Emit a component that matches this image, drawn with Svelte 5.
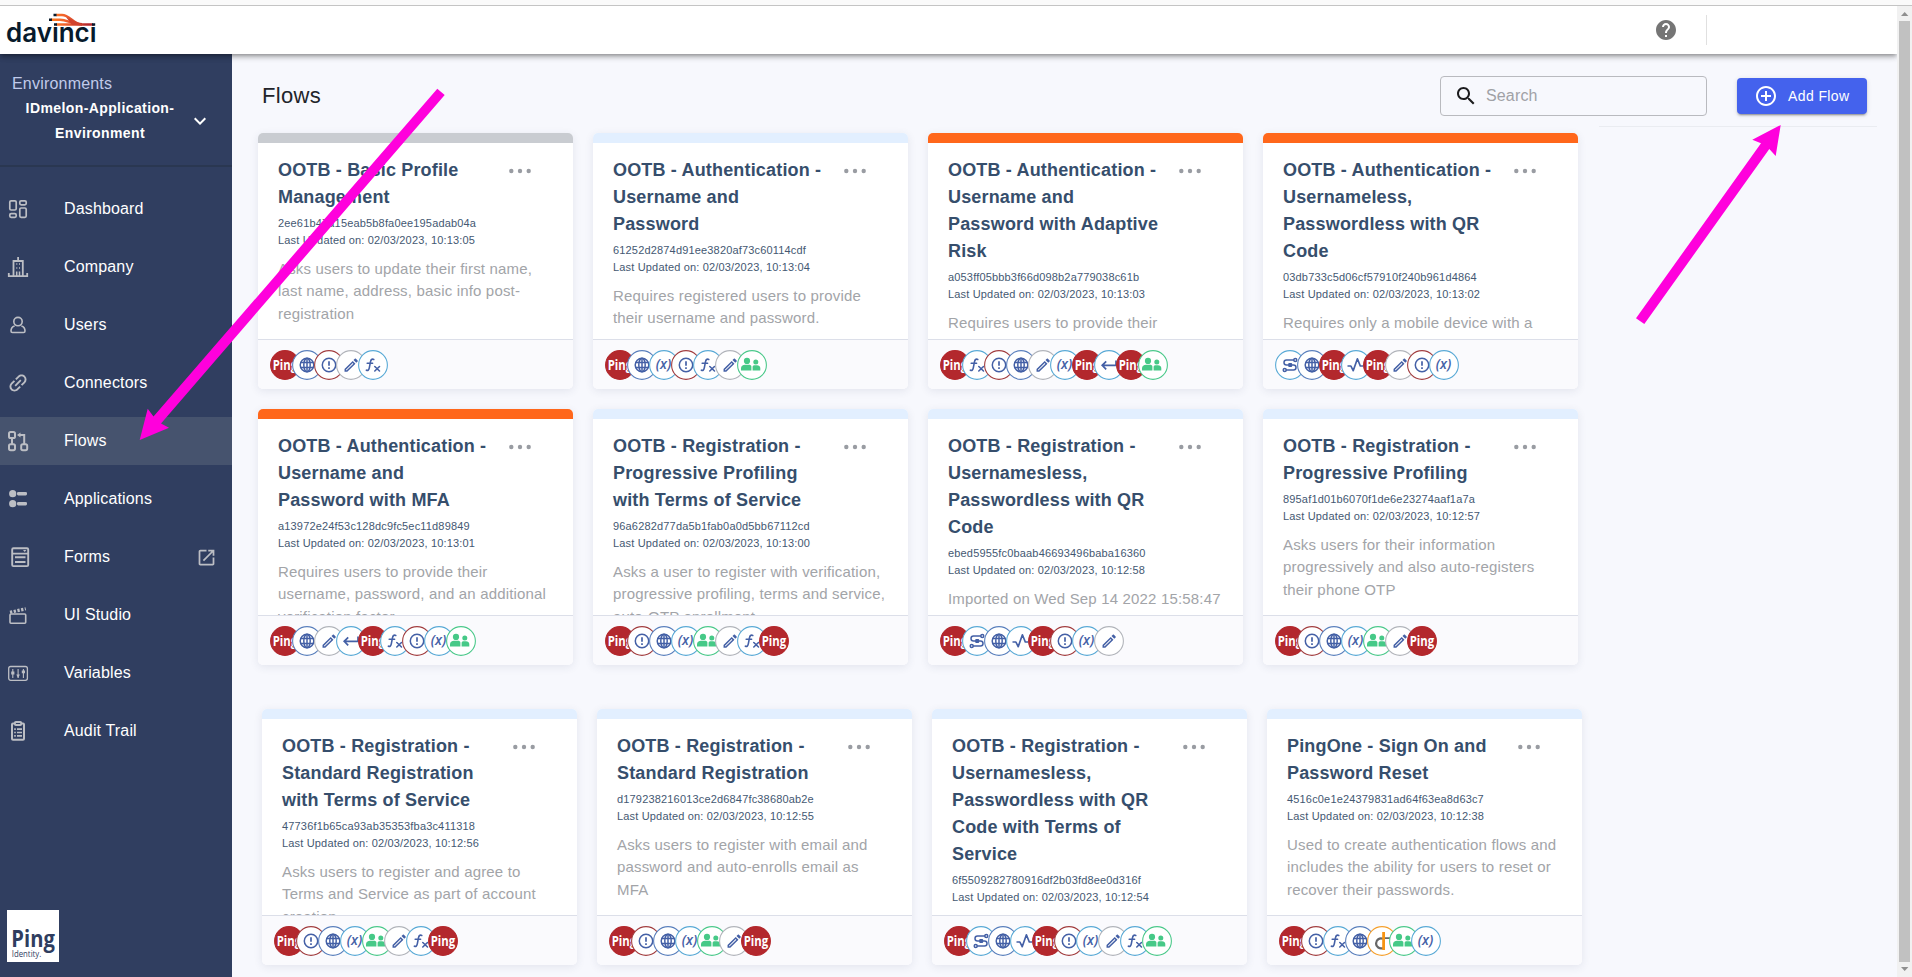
<script>
  const nav = [
    { label: 'Dashboard', icon: '<g fill="none" stroke="currentColor" stroke-width="1.7"><rect x="3.8" y="3.8" width="6.4" height="9.2" rx="1.3"/><rect x="13.8" y="3.8" width="6.4" height="4" rx="1.3"/><rect x="3.8" y="16.7" width="6.4" height="3.6" rx="1.3"/><rect x="13.8" y="11" width="6.4" height="9.3" rx="1.3"/></g>' },
    { label: 'Company', icon: '<g fill="none" stroke="currentColor" stroke-width="1.8"><path d="M2.8 18v3.2h18.4V18M7.500 21V6h9.300v15M12.100 2v4"/><path d="M10.300 9h1M13 9h1M10.300 13h1M13 13h1M10.700 21v-4.500M13.500 21v-4.500" stroke-width="1.500"/></g>' },
    { label: 'Users', icon: '<g fill="none" stroke="currentColor" stroke-width="1.6"><circle cx="12" cy="8.6" r="4.2"/><path d="M8.6 13C6.4 13.6 5 15.6 5 18c0 .9.5 1.5 1.400 1.500h11.200c.9 0 1.400-.6 1.400-1.500 0-2.400-1.400-4.400-3.600-5"/></g>' },
    { label: 'Connectors', icon: '<path fill="currentColor" transform="rotate(-45 12 12)" d="M3.900 12c0-1.710 1.390-3.100 3.100-3.100h4V7H7c-2.760 0-5 2.240-5 5s2.240 5 5 5h4v-1.900H7c-1.710 0-3.100-1.390-3.100-3.100zM8 12.900h8v-1.800H8v1.800zm9-5.900h-4v1.900h4c1.710 0 3.100 1.390 3.100 3.100s-1.390 3.100-3.100 3.100h-4V17h4c2.760 0 5-2.240 5-5s-2.240-5-5-5z"/>' },
    { label: 'Flows', active: true, icon: '<g fill="none" stroke="currentColor" stroke-width="2"><rect x="3" y="3" width="6" height="6" rx="1.6"/><rect x="3" y="15.200" width="6" height="6" rx="1.6"/><rect x="15.200" y="15.200" width="6" height="6" rx="1.6"/><path d="M6 9v6M13 6h5.200v9"/></g><path d="M11 6l3.500-2.500v5z" fill="currentColor"/>' },
    { label: 'Applications', icon: '<g fill="currentColor"><circle cx="6.700" cy="6.700" r="3.600"/><circle cx="6.700" cy="16.700" r="3.600"/><rect x="11" y="5" width="10" height="3.400" rx="1.300"/><rect x="11" y="15" width="10" height="3.400" rx="1.300"/></g>' },
    { label: 'Forms', external: true, icon: '<g fill="none" stroke="currentColor" stroke-width="1.900"><rect x="6.200" y="3.200" width="16" height="17.900" rx="1.200"/><path d="M6 8.600h16M9 12.300h10.500M9 17h10.500" /></g><path d="M17 5h3.400l-1.700 2z" fill="currentColor"/>' },
    { label: 'UI Studio', icon: '<g fill="none" stroke="currentColor"><rect x="4" y="11" width="15.700" height="9.200" rx="1" stroke-width="1.600"/><path d="M4 9.300l15.800-3.500" stroke-width="3.200" stroke-dasharray="2.300 1.500"/></g>' },
    { label: 'Variables', icon: '<g fill="none" stroke="currentColor"><rect x="2.700" y="5.500" width="18.700" height="13.800" rx="2" stroke-width="1.300"/><path d="M6.800 8v9M12.100 8v9M17.400 8v9" stroke-width="1.100"/></g><path fill="currentColor" d="M5.200 10.500h3.200v3H5.200zM10.300 13.500h3.600L12.100 17zM15.800 9.500H19v2.700h-3.200z"/>' },
    { label: 'Audit Trail', icon: '<g fill="none" stroke="currentColor" stroke-width="2"><path d="M9 4.500H7c-.6 0-1 .4-1 1v14.300c0 .6.400 1 1 1h10c.6 0 1-.4 1-1V5.500c0-.6-.4-1-1-1h-2"/><rect x="8.900" y="3" width="6.300" height="3" rx="1"/><path d="M8.200 10.200h1.600M11 10.200h5M8.200 13.500h1.600M11 13.500h5M8.200 16.800h1.600M11 16.800h5" stroke-width="1.700"/></g>' }
  ];

  const blue = '#4460a6';
  const badges = {
    ping: { ring: '#b3282d', fill: '#b3282d', art: '<text x="2.700" y="19.500" font-family="Open Sans, sans-serif" font-weight="700" font-size="14" fill="#fff" textLength="24.500" lengthAdjust="spacingAndGlyphs">Ping</text>' },
    globe: { ring: '#5b80bd', art: `<g fill="none" stroke="${blue}" stroke-width="1.500"><circle cx="15" cy="15" r="6.800"/><ellipse cx="15" cy="15" rx="3.200" ry="6.800"/><path d="M8.800 12.500h12.400M8.800 17.500h12.400M15 8.200v13.600"/></g>` },
    alert: { ring: '#a23e40', art: `<g fill="none" stroke="${blue}" stroke-width="1.500"><circle cx="15" cy="15" r="6.700"/><path d="M15 11.200v4.600M15 17.200v1.800" stroke-width="1.700"/></g>` },
    pencil: { ring: '#b2b5bb', art: `<g transform="translate(6.300 6.300) scale(.74)"><path fill="${blue}" d="M14.060 9.020l.92.92L5.920 19H5v-.92l9.060-9.060M17.660 3c-.25 0-.51.1-.7.290l-1.830 1.830 3.750 3.750 1.830-1.830c.39-.39.39-1.020 0-1.410l-2.340-2.340c-.2-.2-.45-.29-.71-.29zm-3.600 3.190L3 17.250V21h3.750L17.810 9.940l-3.750-3.750z"/></g>` },
    fx: { ring: '#5aaad6', art: `<g fill="none" stroke="${blue}" stroke-width="1.600" stroke-linecap="round"><path d="M15.800 9.400c-1.900-.8-2.900.3-3.300 2.300l-1.200 6.200c-.4 2-1.300 2.900-2.900 2.300M9.200 13.300h5.400"/><path d="M16.800 16.500l4.700 4.500M21.500 16.500l-4.700 4.500"/></g>` },
    varx: { ring: '#5aaad6', art: `<text x="6.700" y="19.200" font-family="Open Sans, sans-serif" font-style="italic" font-weight="600" font-size="14.500" fill="${blue}" textLength="15.500" lengthAdjust="spacingAndGlyphs">(x)</text>` },
    people: { ring: '#4cc98b', art: '<g fill="#46c987"><circle cx="10" cy="10.900" r="3.100"/><circle cx="18.800" cy="11.900" r="2.500"/><path d="M4 20.500v-2.200c0-2.200 1.800-3.500 4-3.500h4c1.200 0 2.400.6 2.400 1.800v3.900zM15.600 20.500v-3.700c0-1 .9-1.600 2-1.600h2.400c1.900 0 3.300 1 3.300 2.900v2.400z"/></g>' },
    back: { ring: '#5aaad6', art: `<path d="M22 10.500v4.800H8.300M12.200 11.300l-4 4 4 4" fill="none" stroke="${blue}" stroke-width="1.700"/>` },
    pulse: { ring: '#5aaad6', art: `<path d="M6.500 16h3.400l2.300 4.700 4.200-11.900 2.900 7.200h3" fill="none" stroke="${blue}" stroke-width="1.700" stroke-linejoin="round"/>` },
    route: { ring: '#5aaad6', art: `<g fill="none" stroke="${blue}" stroke-width="1.500"><path d="M19 10H11.500a2.500 2.500 0 0 0 0 5h7a2.500 2.500 0 0 1 0 5H11"/><circle cx="20.300" cy="9.900" r="1.500"/><circle cx="9.700" cy="20" r="1.500"/></g><rect x="13.200" y="13" width="4" height="4" rx="1" fill="${blue}"/>` },
    dlogo: { ring: '#f5a02e', art: '<path d="M16 12.800A5 5 0 1 0 16 22" fill="none" stroke="#676767" stroke-width="2.300"/><path d="M16.600 6v18" stroke="#f79413" stroke-width="2.800"/><path d="M18 12.200h6" stroke="#676767" stroke-width="1.800"/>' }
  };

  const rows = [
    [
      { tone: 'grey', title: ['OOTB - Basic Profile', 'Management'], id: '2ee61b47a15eab5b8fa0ee195adab04a', time: '10:13:05', desc: ['Asks users to update their first name,', 'last name, address, basic info post-', 'registration'], icons: 'ping globe alert pencil fx' },
      { tone: 'pale', title: ['OOTB - Authentication -', 'Username and', 'Password'], id: '61252d2874d91ee3820af73c60114cdf', time: '10:13:04', desc: ['Requires registered users to provide', 'their username and password.'], icons: 'ping globe varx alert fx pencil people' },
      { tone: 'orange', title: ['OOTB - Authentication -', 'Username and', 'Password with Adaptive', 'Risk'], id: 'a053ff05bbb3f66d098b2a779038c61b', time: '10:13:03', desc: ['Requires users to provide their'], icons: 'ping fx alert globe pencil varx ping back ping people' },
      { tone: 'orange', title: ['OOTB - Authentication -', 'Usernameless,', 'Passwordless with QR', 'Code'], id: '03db733c5d06cf57910f240b961d4864', time: '10:13:02', desc: ['Requires only a mobile device with a'], icons: 'route globe ping pulse ping pencil alert varx' },
      { tone: 'orange', title: ['OOTB - Authentication -', 'Username and', 'Password with MFA'], id: 'a13972e24f53c128dc9fc5ec11d89849', time: '10:13:01', desc: ['Requires users to provide their', 'username, password, and an additional', 'verification factor'], icons: 'ping globe pencil back ping fx alert varx people' },
      { tone: 'pale', title: ['OOTB - Registration -', 'Progressive Profiling', 'with Terms of Service'], id: '96a6282d77da5b1fab0a0d5bb67112cd', time: '10:13:00', desc: ['Asks a user to register with verification,', 'progressive profiling, terms and service,', 'auto-OTP enrollment'], icons: 'ping alert globe varx people pencil fx ping' },
      { tone: 'pale', title: ['OOTB - Registration -', 'Usernamesless,', 'Passwordless with QR', 'Code'], id: 'ebed5955fc0baab46693496baba16360', time: '10:12:58', desc: ['Imported on Wed Sep 14 2022 15:58:47'], icons: 'ping route globe pulse ping alert varx pencil' },
      { tone: 'pale', title: ['OOTB - Registration -', 'Progressive Profiling'], id: '895af1d01b6070f1de6e23274aaf1a7a', time: '10:12:57', desc: ['Asks users for their information', 'progressively and also auto-registers', 'their phone OTP'], icons: 'ping alert globe varx people pencil ping' }
    ],
    [
      { tone: 'pale', title: ['OOTB - Registration -', 'Standard Registration', 'with Terms of Service'], id: '47736f1b65ca93ab35353fba3c411318', time: '10:12:56', desc: ['Asks users to register and agree to', 'Terms and Service as part of account', 'creation'], icons: 'ping alert globe varx people pencil fx ping' },
      { tone: 'pale', title: ['OOTB - Registration -', 'Standard Registration'], id: 'd179238216013ce2d6847fc38680ab2e', time: '10:12:55', desc: ['Asks users to register with email and', 'password and auto-enrolls email as', 'MFA'], icons: 'ping alert globe varx people pencil ping' },
      { tone: 'pale', title: ['OOTB - Registration -', 'Usernamesless,', 'Passwordless with QR', 'Code with Terms of', 'Service'], id: '6f5509282780916df2b03fd8ee0d316f', time: '10:12:54', desc: [], icons: 'ping route globe pulse ping alert varx pencil fx people' },
      { tone: 'pale', title: ['PingOne - Sign On and', 'Password Reset'], id: '4516c0e1e24379831ad64f63ea8d63c7', time: '10:12:38', desc: ['Used to create authentication flows and', 'includes the ability for users to reset or', 'recover their passwords.'], icons: 'ping alert fx globe dlogo people varx' }
    ]
  ];
</script>

<div class="page">
  <div class="strip"></div>
  <div class="window">
    <div class="app">
      <header>
        <svg class="logo" width="100" height="48" viewBox="0 6 100 48">
          <defs>
            <linearGradient id="flame" gradientUnits="userSpaceOnUse" x1="53" y1="0" x2="88" y2="0">
              <stop offset="0" stop-color="#ff7a22" /><stop offset=".35" stop-color="#f0602c" /><stop offset="1" stop-color="#b3282d" />
            </linearGradient>
          </defs>
          <text x="6" y="41.500" font-family="Inter, sans-serif" font-weight="600" font-size="26.500" fill="#071a2c" textLength="90.500" lengthAdjust="spacingAndGlyphs">davinci</text>
          <rect x="51" y="13" width="46" height="14" fill="#fff" />
          <g fill="none" stroke="url(#flame)" stroke-width="2.400">
            <path d="M56 15h6c8 0 11 9 20 9.300" />
            <path d="M51 19.700h9c8 0 10 4.700 22 4.700" />
            <path d="M56 24.500h37.010v-.01" />
          </g>
          <path d="M66 17l12 6 6 2h-12z" fill="#d2432c" />
          <path d="M53.500 15h3M49 19.700h3M54 24.500h3M92 24.500h3.200" stroke="#071a2c" stroke-width="2.400" />
        </svg>
        <svg class="help" width="24" height="24" viewBox="0 0 24 24"><path fill="#757575" d="M12 2C6.480 2 2 6.480 2 12s4.480 10 10 10 10-4.480 10-10S17.520 2 12 2zm1 17h-2v-2h2v2zm2.070-7.750l-.9.920C13.450 12.900 13 13.500 13 15h-2v-.5c0-1.100.45-2.100 1.170-2.830l1.240-1.260c.37-.36.59-.86.59-1.410 0-1.100-.9-2-2-2s-2 .9-2 2H8c0-2.210 1.790-4 4-4s4 1.790 4 4c0 .88-.36 1.680-.93 2.250z" /></svg>
        <div class="rule"></div>
      </header>
      <div class="body">
        <aside>
          <div class="env">
            <div class="env-label">Environments</div>
            <div class="env-pick">
              <div class="env-name">IDmelon-Application-<br />Environment</div>
              <svg width="24" height="24" viewBox="0 0 24 24"><path fill="#fff" d="M16.590 8.590L12 13.170 7.410 8.590 6 10l6 6 6-6z" /></svg>
            </div>
          </div>
          <nav>
            {#each nav as item}
              <div class="item" class:active={item.active}>
                <svg width="24" height="24" viewBox="0 0 24 24">{@html item.icon}</svg>
                <span>{item.label}</span>
                {#if item.external}
                  <svg width="21" height="21" viewBox="0 0 24 24"><path fill="currentColor" d="M19 19H5V5h7V3H5c-1.110 0-2 .9-2 2v14c0 1.100.89 2 2 2h14c1.100 0 2-.9 2-2v-7h-2v7zM14 3v2h3.590l-9.830 9.830 1.410 1.410L19 6.410V10h2V3h-7z" /></svg>
                {/if}
              </div>
            {/each}
          </nav>
          <div class="brand"><svg width="52" height="52" viewBox="0 0 52 52" fill="#2f3d5f" font-family="Open Sans, sans-serif">
            <text x="4.300" y="36.500" font-weight="700" font-size="23" textLength="43.500" lengthAdjust="spacingAndGlyphs">Ping</text>
            <text x="4.800" y="46.500" font-size="9" textLength="29.500" lengthAdjust="spacingAndGlyphs">Identity.</text>
          </svg></div>
        </aside>
        <main>
          <div class="toolbar">
            <h1>Flows</h1>
            <div class="search">
              <svg width="24" height="24" viewBox="0 0 24 24"><path fill="#1c1c1e" d="M15.500 14h-.79l-.28-.27C15.410 12.590 16 11.110 16 9.500 16 5.910 13.090 3 9.500 3S3 5.910 3 9.500 5.910 16 9.500 16c1.610 0 3.090-.59 4.230-1.570l.27.28v.79l5 4.990L20.490 19l-4.990-5zm-6 0C7.010 14 5 11.990 5 9.500S7.010 5 9.500 5 14 7.010 14 9.500 11.990 14 9.500 14z" /></svg>
              <span>Search</span>
            </div>
            <button>
              <svg width="24" height="24" viewBox="0 0 24 24"><path fill="#fff" d="M13 7h-2v4H7v2h4v4h2v-4h4v-2h-4V7zm-1-5C6.480 2 2 6.480 2 12s4.480 10 10 10 10-4.480 10-10S17.520 2 12 2zm0 18c-4.410 0-8-3.590-8-8s3.590-8 8-8 8 3.590 8 8-3.590 8-8 8z" /></svg>
              Add Flow
            </button>
          </div>
          <div class="line"></div>
          {#each rows as cards, r}
            <div class="grid" class:more={r > 0}>
              {#each cards as card}
                <article class="card">
                  <div class="bar {card.tone}"></div>
                  <div class="info">
                    <svg class="dots" width="24" height="6" viewBox="0 0 24 6" fill="#999ca2"><circle cx="3.300" cy="3" r="2.200" /><circle cx="12" cy="3" r="2.200" /><circle cx="20.700" cy="3" r="2.200" /></svg>
                    <h2>{#each card.title as t}<span>{t}</span>{/each}</h2>
                    <div class="meta"><span>{card.id}</span><span>Last Updated on: 02/03/2023, {card.time}</span></div>
                    <p>{#each card.desc as d}<span>{d}</span>{/each}</p>
                  </div>
                  <footer>
                    {#each card.icons.split(' ') as name}
                      <svg width="30" height="30" viewBox="0 0 30 30"><circle cx="15" cy="15" r="14.400" fill={badges[name].fill ?? '#fff'} stroke={badges[name].ring} stroke-width="1.100" />{@html badges[name].art}</svg>
                    {/each}
                  </footer>
                </article>
              {/each}
            </div>
          {/each}
        </main>
      </div>
    </div>
    <div class="scroll">
      <svg width="15" height="15" viewBox="0 0 15 15"><path d="M4 10h7.400L7.700 6z" fill="#8f8f8f" /></svg>
      <div class="thumb"></div>
      <svg width="15" height="15" viewBox="0 0 15 15"><path d="M4 5h7.400L7.700 9z" fill="#8f8f8f" /></svg>
    </div>
  </div>
  <svg class="arrows" width="1912" height="977" viewBox="0 0 1912 977" fill="#ff00dc">
    <polygon points="437.300,88.700 444.700,95 161,423.500 169,427.700 139.700,440 147.700,408.700 153.500,416.500" />
    <polygon points="1636,318.300 1644.300,324 1769.300,149 1775.700,156 1780.700,125 1752.300,139.700 1761,143.300" />
  </svg>
</div>

<style>
  :global(body) { margin: 0; overflow: hidden; }
  .page { position: relative; width: 1912px; height: 977px; overflow: hidden; display: flex; flex-direction: column; font-family: "Liberation Sans", Arial, sans-serif; letter-spacing: 0.15px; background: #f7f8fd; }
  .strip { flex: none; height: 5px; background: #fafafa; border-bottom: 1px solid #c4c4c4; }
  .window { flex: 1; min-height: 0; display: flex; }
  .app { width: 1897px; display: flex; flex-direction: column; overflow: hidden; }
  header { position: relative; z-index: 2; flex: none; height: 48px; background: #fff; display: flex; align-items: center; box-shadow: 0 2px 4px -1px rgba(0,0,0,.3), 0 4px 5px rgba(0,0,0,.14), 0 1px 8px rgba(0,0,0,.12); }
  .help { margin-left: auto; margin-right: 28px; }
  .rule { width: 1px; height: 30px; background: #e0e0e0; margin-right: 190px; }
  .body { flex: 1; min-height: 0; display: flex; }
  aside { width: 232px; flex: none; background: #303e60; color: #fff; display: flex; flex-direction: column; }
  .env { height: 113px; border-bottom: 2px solid #2a3751; padding-top: 20px; box-sizing: border-box; }
  .env-label { font-size: 16px; line-height: 18px; padding: 0 12px; color: #c0caea; margin-top: 1px; letter-spacing: 0.2px; }
  .env-pick { display: flex; align-items: center; padding-left: 25px; gap: 13px; margin-top: 3px; }
  .env-name { width: 150px; text-align: center; white-space: nowrap; font-size: 14px; font-weight: 700; line-height: 24.5px; letter-spacing: 0.4px; }
  nav { display: flex; flex-direction: column; gap: 10px; padding-top: 18px; }
  .item { height: 48px; display: flex; align-items: center; padding-left: 6px; color: #bcbec4; }
  .item span { margin-left: 34px; width: 131.500px; color: #fff; font-size: 16px; }
  .active { background: #46536e; }
  .brand { width: 52px; height: 52px; background: #fff; margin: auto 0 15px 7px; }
  .brand svg { display: block; letter-spacing: 0; }
  main { flex: 1; min-width: 0; }
  .toolbar { height: 72px; display: flex; align-items: flex-start; padding: 0 30px 0 30px; box-sizing: border-box; }
  h1 { margin: 28px auto 0 0; font-size: 22px; font-weight: 400; line-height: 28px; color: #22242a; letter-spacing: 0.3px; }
  .search { width: 267px; height: 40px; margin-top: 22px; box-sizing: border-box; border: 1px solid #b9babf; border-radius: 4px; display: flex; align-items: center; padding-left: 13px; gap: 8px; font-size: 16px; color: #a0a1a6; }
  button { margin: 24px 0 0 30px; width: 130px; height: 36px; border: 0; border-radius: 4px; padding: 0 0 0 17px; background: #4462ed; color: #fff; font: 14px "Liberation Sans", Arial, sans-serif; letter-spacing: 0.4px; display: flex; align-items: center; gap: 10px; white-space: nowrap; box-shadow: 0 3px 1px -2px rgba(0,0,0,.2), 0 2px 2px rgba(0,0,0,.14), 0 1px 5px rgba(0,0,0,.12); }
  .line { height: 1px; width: 278px; margin: 0 20px 6px auto; background: #eaecf1; }
  .grid { display: grid; grid-template-columns: repeat(4, 315px); grid-auto-rows: 256px; gap: 20px; padding-left: 26px; }
  .more { padding-left: 30px; margin-top: 44px; }
  .card { background: #fff; border-radius: 5px; overflow: hidden; box-shadow: 0 2px 8px rgba(50,60,100,.1); display: flex; flex-direction: column; letter-spacing: 0.17px; }
  .bar { flex: none; height: 10px; }
  .grey { background: #c9ccd1; }
  .pale { background: #e2efff; }
  .orange { background: #ff671b; }
  .info { position: relative; flex: none; height: 196px; overflow: hidden; padding: 14px 0 0 20px; box-sizing: border-box; white-space: nowrap; }
  .info span { display: block; }
  .dots { position: absolute; left: 250px; top: 25px; }
  h2 { margin: 0; font-size: 18px; line-height: 27px; color: #364e6c; }
  .meta { margin-top: 4px; font-size: 11px; line-height: 17px; color: #445872; }
  p { margin: 8.500px 0 0; font-size: 15px; line-height: 22.500px; color: #a2a4a8; }
  footer { height: 50px; box-sizing: border-box; background: #fafafd; border-top: 1px solid #dcdfe9; display: flex; align-items: center; padding: 1px 0 0 12px; }
  footer svg { flex: none; margin-right: -8px; letter-spacing: 0; }
  .logo { letter-spacing: 0; }
  .scroll { width: 15px; background: #f1f1f1; display: flex; flex-direction: column; align-items: center; }
  .scroll svg { flex: none; }
  .thumb { flex: 1; width: 11px; background: #c1c1c1; }
  .arrows { position: absolute; left: 0; top: 0; z-index: 5; pointer-events: none; }
</style>
